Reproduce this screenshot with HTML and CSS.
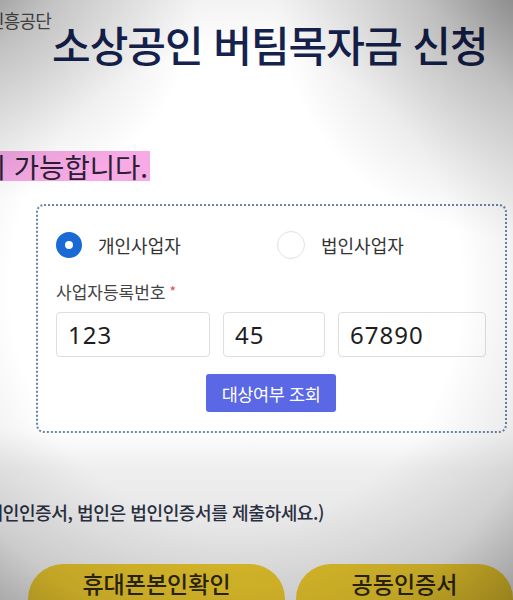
FILE: index.html
```html
<!DOCTYPE html>
<html lang="ko">
<head>
<meta charset="utf-8">
<link rel="stylesheet" href="styles.css">
</head>
<body>
<div class="page">
  <div class="org"><span>소상공인시장진흥공단</span></div>
  <h1 class="title">소상공인 버팀목자금 신청</h1>
  <div class="notice"><span class="mark">신청이 가능합니다.</span></div>

  <div class="card">
    <div class="radios">
      <label class="radio"><span class="dot on"></span><span>개인사업자</span></label>
      <label class="radio"><span class="dot"></span><span>법인사업자</span></label>
    </div>
    <div class="field-label">사업자등록번호<span class="req">*</span></div>
    <div class="inputs">
      <div class="input">123</div>
      <div class="input">45</div>
      <div class="input">67890</div>
    </div>
    <div class="btn-row"><button class="check">대상여부 조회</button></div>
  </div>

  <div class="cert"><span>(개인은 개인인증서, 법인은 법인인증서를 제출하세요.)</span></div>

  <div class="auth">
    <button class="yellow">휴대폰본인확인</button>
    <button class="yellow">공동인증서</button>
  </div>
</div>
<div class="vignette"></div>
</body>
</html>
```
FILE: styles.css
```css
html, body {
  margin: 0;
  padding: 0;
  width: 513px;
  height: 600px;
  overflow: hidden;
  background: #ffffff;
}
body {
  font-family: "Noto Sans CJK KR", "Noto Sans", sans-serif;
  color: #333;
}
.page {
  width: 513px;
  height: 600px;
  overflow: hidden;
  background: linear-gradient(#ffffff 0, #ffffff 430px, #eeeeee 470px, #dddddd 600px);
}
.org, .notice, .cert {
  display: flex;
  justify-content: flex-end;
  white-space: nowrap;
}
.org {
  width: 51px;
  margin-top: 9px;
  font-size: 18px;
  line-height: 22px;
  color: #555;
  letter-spacing: -0.8px;
}
.title {
  margin: -12px 0 0 52px;
  font-size: 42px;
  line-height: 50px;
  font-weight: 500;
  color: #16234f;
  letter-spacing: -1px;
  white-space: nowrap;
}
.notice {
  width: 150px;
  margin-top: 82px;
}
.mark {
  display: inline-block;
  height: 30px;
  line-height: 30px;
  font-size: 27.5px;
  background: #f7aae6;
  color: #2b2034;
  padding-right: 2px;
}
.card {
  margin: 23px 0 0 36px;
  width: 471px;
  box-sizing: border-box;
  border: 2px dotted #6a86a8;
  border-radius: 8px;
  background: #fff;
  padding: 25px 19px 19px 18px;
}
.radios {
  display: grid;
  grid-template-columns: 221px 1fr;
  align-items: center;
}
.radio {
  display: flex;
  align-items: center;
  gap: 16px;
  font-size: 18px;
  line-height: 28px;
  color: #333;
}
.dot {
  width: 26px;
  height: 26px;
  box-sizing: border-box;
  border-radius: 50%;
  border: 1px solid #e2e2e2;
  background: #fff;
}
.dot.on {
  border: 9px solid #1a6ad6;
}
.radio + .radio .dot {
  width: 28px;
  height: 28px;
}
.field-label {
  margin-top: 21px;
  font-size: 17px;
  line-height: 22px;
  color: #444;
}
.req {
  color: #e34b4b;
  margin-left: 4px;
  font-size: 14px;
  vertical-align: 2px;
}
.inputs {
  margin-top: 9px;
  display: grid;
  grid-template-columns: 154px 102px 148px;
  gap: 13px;
}
.input {
  height: 45px;
  box-sizing: border-box;
  border: 1px solid #dedede;
  border-radius: 4px;
  padding-left: 11px;
  font-family: "Noto Sans", sans-serif;
  font-size: 24px;
  line-height: 43px;
  letter-spacing: 1px;
  color: #1e1e1e;
}
.btn-row {
  display: flex;
  justify-content: center;
  margin-top: 17px;
}
.check {
  width: 130px;
  height: 38px;
  border: 0;
  border-radius: 3px;
  background: #5a68e6;
  color: #fff;
  font-family: "Noto Sans CJK KR", sans-serif;
  font-size: 17.5px;
  letter-spacing: -0.4px;
  padding: 0;
}
.cert {
  width: 324px;
  margin-top: 67px;
  font-size: 18.1px;
  line-height: 24px;
  font-weight: 500;
  color: #2a2f42;
  letter-spacing: -0.45px;
}
.auth {
  margin-top: 40px;
  display: grid;
  grid-template-columns: 257px 217px;
  gap: 11px;
  padding-left: 28px;
}
.yellow {
  height: 70px;
  border: 0;
  border-radius: 36px;
  background: #d9b92a;
  color: #2a2512;
  font-family: "Noto Sans CJK KR", sans-serif;
  font-size: 23px;
  line-height: 30px;
  font-weight: 500;
  text-align: center;
  padding: 4px 0 0 0;
  display: flex;
  justify-content: center;
  align-items: flex-start;
}
.vignette {
  position: fixed;
  inset: 0;
  pointer-events: none;
  background:
    radial-gradient(circle at 100% 0, rgba(0,0,0,0.25), rgba(0,0,0,0) 30%),
    radial-gradient(circle at 0 0, rgba(0,0,0,0.2), rgba(0,0,0,0) 25%),
    radial-gradient(ellipse 80% 72% at 46% 48%, rgba(0,0,0,0) 55%, rgba(0,0,0,0.1) 80%, rgba(0,0,0,0.36) 105%);
}
```
